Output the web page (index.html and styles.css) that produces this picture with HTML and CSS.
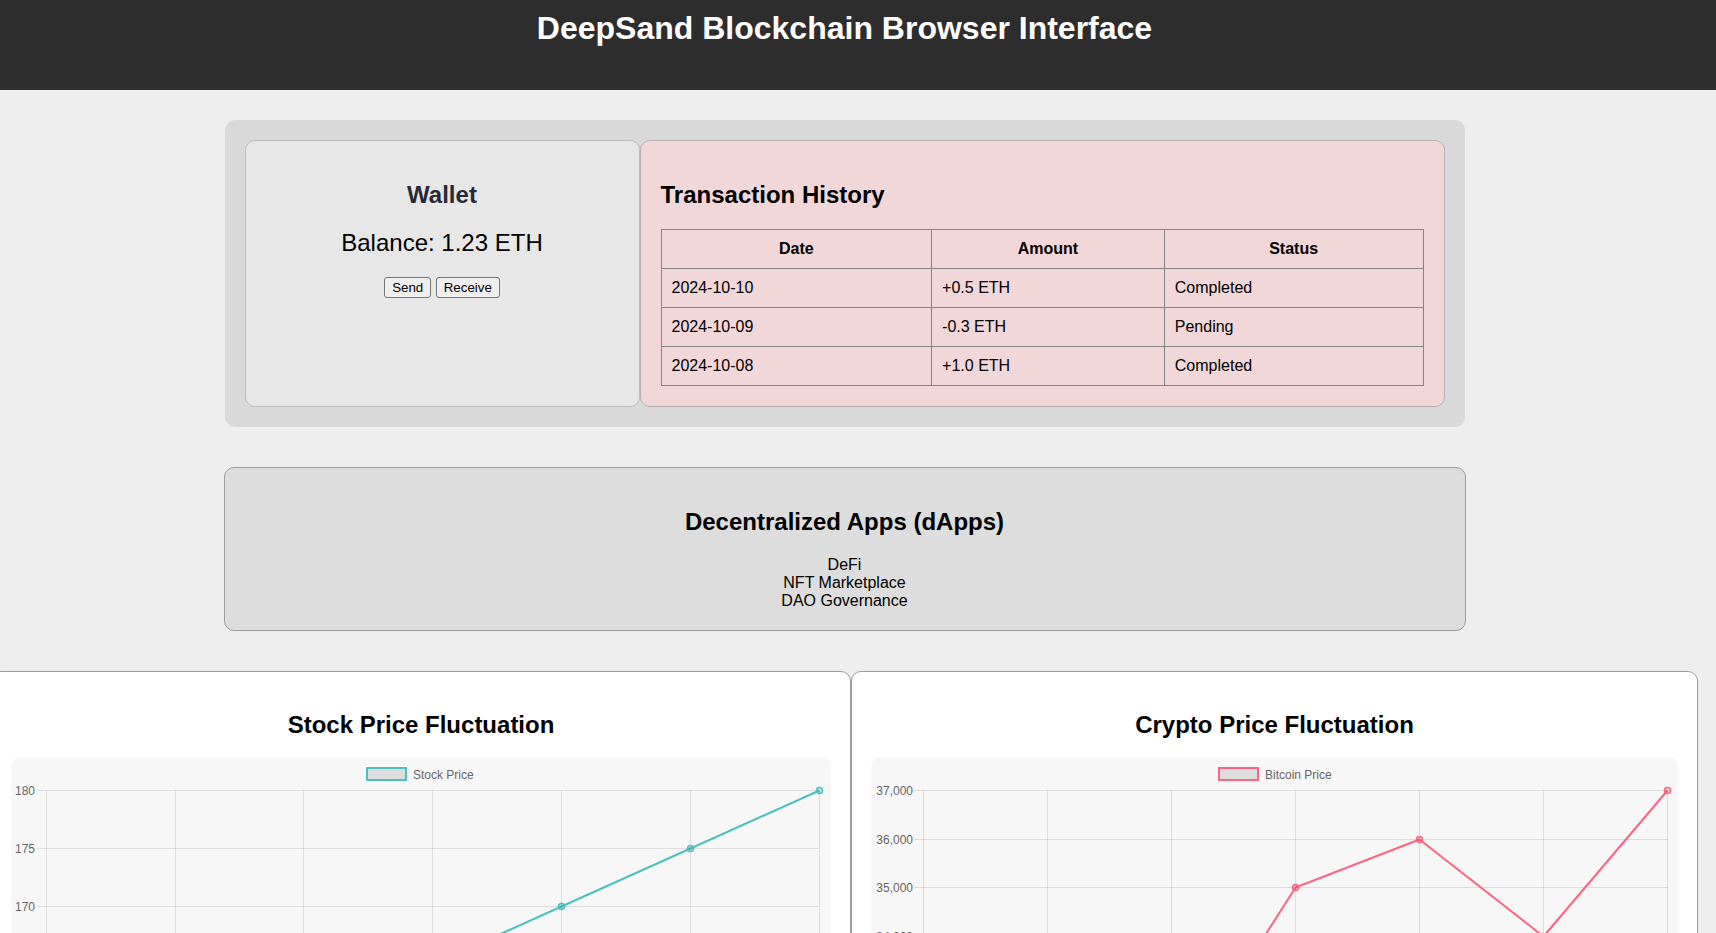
FILE: index.html
```html
<!DOCTYPE html>
<html lang="en">
<head>
<meta charset="utf-8">
<title>DeepSand Blockchain Browser Interface</title>
<link rel="stylesheet" href="styles.css">
</head>
<body>
<header class="site-header">
  <h1 class="site-title">DeepSand Blockchain Browser Interface</h1>
</header>
<main class="page">
  <section class="top-panel">
    <div class="card wallet">
      <h2 class="wallet-title">Wallet</h2>
      <p class="balance">Balance: 1.23 ETH</p>
      <div class="actions"><button class="btn">Send</button> <button class="btn">Receive</button></div>
    </div>
    <div class="card history">
      <h2 class="section-title">Transaction History</h2>
      <table class="tx-table">
        <thead>
          <tr><th class="col-date">Date</th><th class="col-amount">Amount</th><th class="col-status">Status</th></tr>
        </thead>
        <tbody>
          <tr><td>2024-10-10</td><td>+0.5 ETH</td><td>Completed</td></tr>
          <tr><td>2024-10-09</td><td>-0.3 ETH</td><td>Pending</td></tr>
          <tr><td>2024-10-08</td><td>+1.0 ETH</td><td>Completed</td></tr>
        </tbody>
      </table>
    </div>
  </section>

  <section class="dapps">
    <h2 class="section-title">Decentralized Apps (dApps)</h2>
    <ul class="dapp-list">
      <li>DeFi</li>
      <li>NFT Marketplace</li>
      <li>DAO Governance</li>
    </ul>
  </section>

  <section class="charts">
    <div class="chart-card chart-stock">
      <h2 class="section-title">Stock Price Fluctuation</h2>
      <div class="chart-canvas">
        <svg class="chart-svg" width="818" height="420" viewBox="0 0 818 420">
          <g class="grid" stroke="rgba(0,0,0,0.1)" stroke-width="1" fill="none">
            <line x1="25" y1="32.5" x2="807" y2="32.5"/>
            <line x1="25" y1="90.5" x2="807" y2="90.5"/>
            <line x1="25" y1="148.5" x2="807" y2="148.5"/>
            <line x1="25" y1="206.5" x2="807" y2="206.5"/>
            <line x1="25" y1="264.5" x2="807" y2="264.5"/>
            <line x1="25" y1="322.5" x2="807" y2="322.5"/>
            <line x1="25" y1="380.5" x2="807" y2="380.5"/>
            <line x1="34.5" y1="32.5" x2="34.5" y2="390"/>
            <line x1="163.5" y1="32.5" x2="163.5" y2="390"/>
            <line x1="291.5" y1="32.5" x2="291.5" y2="390"/>
            <line x1="420.5" y1="32.5" x2="420.5" y2="390"/>
            <line x1="549.5" y1="32.5" x2="549.5" y2="390"/>
            <line x1="678.5" y1="32.5" x2="678.5" y2="390"/>
            <line x1="807.5" y1="32.5" x2="807.5" y2="390"/>
          </g>
          <g class="axis-labels" fill="#666" font-family="Liberation Sans, Arial, sans-serif" font-size="12" text-anchor="end">
            <text x="23" y="36.8">180</text>
            <text x="23" y="94.8">175</text>
            <text x="23" y="152.8">170</text>
            <text x="23" y="210.8">165</text>
            <text x="23" y="268.8">160</text>
            <text x="23" y="326.8">155</text>
            <text x="23" y="384.8">150</text>
          </g>
          <g class="axis-labels" fill="#666" font-family="Liberation Sans, Arial, sans-serif" font-size="12" text-anchor="middle">
            <text x="34.5" y="405">Jan</text>
            <text x="163.5" y="405">Feb</text>
            <text x="291.5" y="405">Mar</text>
            <text x="420.5" y="405">Apr</text>
            <text x="549.5" y="405">May</text>
            <text x="678.5" y="405">Jun</text>
            <text x="807.5" y="405">Jul</text>
          </g>
          <rect x="355" y="10" width="39" height="12" fill="rgba(0,0,0,0.1)" stroke="#4bc0c0" stroke-width="2"/>
          <text x="401" y="20.8" fill="#666" font-family="Liberation Sans, Arial, sans-serif" font-size="12">Stock Price</text>
          <polyline fill="none" stroke="#4bc0c0" stroke-width="2" stroke-linejoin="round"
            points="34.5,380.5 163.5,322.5 291.5,264.5 420.5,206.5 549.5,148.5 678.5,90.5 807.5,32.5"/>
          <g fill="rgba(0,0,0,0.1)" stroke="#4bc0c0" stroke-width="1.5">
            <circle cx="34.5" cy="380.5" r="3"/>
            <circle cx="163.5" cy="322.5" r="3"/>
            <circle cx="291.5" cy="264.5" r="3"/>
            <circle cx="420.5" cy="206.5" r="3"/>
            <circle cx="549.5" cy="148.5" r="3"/>
            <circle cx="678.5" cy="90.5" r="3"/>
            <circle cx="807.5" cy="32.5" r="3"/>
          </g>
        </svg>
      </div>
    </div>
    <div class="chart-card chart-crypto">
      <h2 class="section-title">Crypto Price Fluctuation</h2>
      <div class="chart-canvas">
        <svg class="chart-svg" width="806" height="420" viewBox="0 0 806 420">
          <g class="grid" stroke="rgba(0,0,0,0.1)" stroke-width="1" fill="none">
            <line x1="42" y1="32.5" x2="796" y2="32.5"/>
            <line x1="42" y1="81.5" x2="796" y2="81.5"/>
            <line x1="42" y1="129.5" x2="796" y2="129.5"/>
            <line x1="42" y1="178.5" x2="796" y2="178.5"/>
            <line x1="42" y1="227.5" x2="796" y2="227.5"/>
            <line x1="42" y1="276.5" x2="796" y2="276.5"/>
            <line x1="42" y1="324.5" x2="796" y2="324.5"/>
            <line x1="42" y1="373.5" x2="796" y2="373.5"/>
            <line x1="51.5" y1="32.5" x2="51.5" y2="383"/>
            <line x1="175.5" y1="32.5" x2="175.5" y2="383"/>
            <line x1="299.5" y1="32.5" x2="299.5" y2="383"/>
            <line x1="423.5" y1="32.5" x2="423.5" y2="383"/>
            <line x1="547.5" y1="32.5" x2="547.5" y2="383"/>
            <line x1="671.5" y1="32.5" x2="671.5" y2="383"/>
            <line x1="795.5" y1="32.5" x2="795.5" y2="383"/>
          </g>
          <g class="axis-labels" fill="#666" font-family="Liberation Sans, Arial, sans-serif" font-size="12" text-anchor="end">
            <text x="41" y="36.8">37,000</text>
            <text x="41" y="85.8">36,000</text>
            <text x="41" y="133.8">35,000</text>
            <text x="41" y="182.8">34,000</text>
            <text x="41" y="231.8">33,000</text>
            <text x="41" y="280.8">32,000</text>
            <text x="41" y="328.8">31,000</text>
            <text x="41" y="377.8">30,000</text>
          </g>
          <g class="axis-labels" fill="#666" font-family="Liberation Sans, Arial, sans-serif" font-size="12" text-anchor="middle">
            <text x="51.5" y="398">Jan</text>
            <text x="175.5" y="398">Feb</text>
            <text x="299.5" y="398">Mar</text>
            <text x="423.5" y="398">Apr</text>
            <text x="547.5" y="398">May</text>
            <text x="671.5" y="398">Jun</text>
            <text x="795.5" y="398">Jul</text>
          </g>
          <rect x="347" y="10" width="39" height="12" fill="rgba(0,0,0,0.1)" stroke="#ff6384" stroke-width="2"/>
          <text x="393" y="20.8" fill="#666" font-family="Liberation Sans, Arial, sans-serif" font-size="12">Bitcoin Price</text>
          <polyline fill="none" stroke="#ff6384" stroke-width="2" stroke-linejoin="round"
            points="51.5,373.5 175.5,276.5 299.5,324.5 423.5,129.5 547.5,81.5 671.5,178.5 795.5,32.5"/>
          <g fill="rgba(0,0,0,0.1)" stroke="#ff6384" stroke-width="1.5">
            <circle cx="51.5" cy="373.5" r="3"/>
            <circle cx="175.5" cy="276.5" r="3"/>
            <circle cx="299.5" cy="324.5" r="3"/>
            <circle cx="423.5" cy="129.5" r="3"/>
            <circle cx="547.5" cy="81.5" r="3"/>
            <circle cx="671.5" cy="178.5" r="3"/>
            <circle cx="795.5" cy="32.5" r="3"/>
          </g>
        </svg>
      </div>
    </div>
  </section>
</main>
</body>
</html>
```

FILE: styles.css
```css
html, body {
  margin: 0;
  padding: 0;
}

body {
  background: #eeeeee;
  font-family: "Liberation Sans", Arial, sans-serif;
  font-size: 16px;
  color: #000;
}

.site-header {
  background: #2d2d2d;
  height: 90px;
  box-sizing: border-box;
  padding: 10px 27px 0 0;
}

.site-title {
  margin: 0;
  color: #fff;
  font-size: 32px;
  font-weight: bold;
  text-align: center;
}

.page {
  padding: 30px 27px 40px 0;
  display: flex;
  flex-direction: column;
  align-items: center;
  gap: 40px;
}

.top-panel {
  width: 1200px;
  padding: 20px;
  background: #d9d9d9;
  border-radius: 10px;
  display: flex;
}

.card {
  box-sizing: border-box;
  border: 1px solid #bdbdbd;
  border-radius: 10px;
  padding: 20px;
}

.wallet {
  flex: 0 0 395px;
  background: #e7e7e7;
  text-align: center;
}

.history {
  flex: 1 1 auto;
  background: #f2d7d9;
  border-color: #b8b0b1;
}

.section-title {
  font-size: 24px;
  font-weight: bold;
  margin: 0.83em 0;
}

.wallet-title {
  font-size: 24px;
  font-weight: bold;
  margin: 0.83em 0;
  color: #262a36;
}

.balance {
  font-size: 24px;
  margin: 19.92px 0 20px;
}

.actions {
  line-height: 18px;
}

.btn {
  font-family: "Liberation Sans", Arial, sans-serif;
  font-size: 13.333px;
  line-height: normal;
  padding: 2px 7px;
  border: 1px solid #767676;
  border-radius: 3px;
  background: #efefef;
  color: #000;
}

.tx-table {
  width: 100%;
  border-collapse: collapse;
}

.tx-table th,
.tx-table td {
  border: 1px solid #858585;
  padding: 10px;
  text-align: left;
  font-size: 16px;
}

.tx-table th {
  text-align: center;
  font-weight: bold;
}

.col-date { width: 250px; }
.col-amount { width: 212px; }
.col-status { width: 238px; }

.dapps {
  width: 1200px;
  padding: 20px;
  background: #dddddd;
  border: 1px solid #9c9c9c;
  border-radius: 10px;
  text-align: center;
}

.dapp-list {
  list-style: none;
  margin: 0;
  padding: 0;
}

.charts {
  align-self: stretch;
  display: flex;
  justify-content: center;
}

.chart-card {
  flex: none;
  box-sizing: border-box;
  background: #fff;
  border: 1px solid #9c9c9c;
  border-radius: 10px;
  padding: 19px 20px 20px;
  text-align: center;
}

.chart-stock { width: 860px; }
.chart-crypto { width: 847px; }

.chart-canvas {
  background: #f7f7f7;
  border-radius: 8px;
  box-shadow: 0 0 3px rgba(0, 0, 0, 0.06);
  text-align: left;
  line-height: 0;
}

.chart-svg {
  display: block;
}
```
